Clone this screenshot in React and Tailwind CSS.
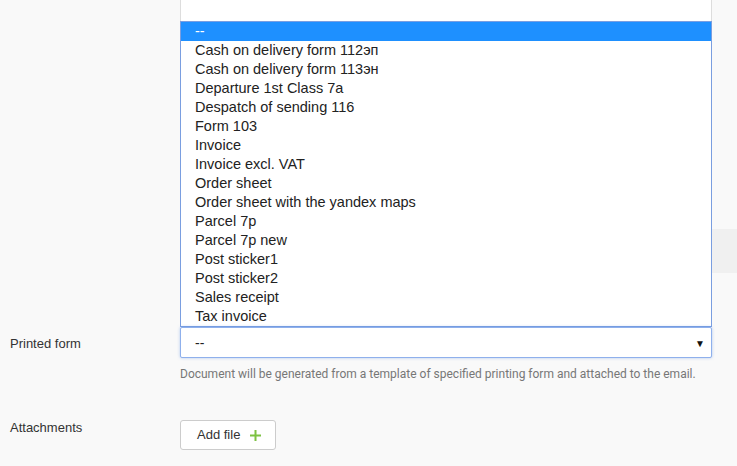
import { useState } from 'react';

const forms = [
  '--',
  'Cash on delivery form 112эп',
  'Cash on delivery form 113эн',
  'Departure 1st Class 7a',
  'Despatch of sending 116',
  'Form 103',
  'Invoice',
  'Invoice excl. VAT',
  'Order sheet',
  'Order sheet with the yandex maps',
  'Parcel 7p',
  'Parcel 7p new',
  'Post sticker1',
  'Post sticker2',
  'Sales receipt',
  'Tax invoice',
];

const App = () => {
  const [selected, setSelected] = useState('--');

  return (
    <div className="min-h-[466px] w-[737px] bg-[#f9f9f9] font-['Liberation_Sans',Arial,sans-serif] text-[#333] overflow-hidden">
      {/* field above, mostly hidden under the open list */}
      <div className="flex">
        <div className="w-[180px] shrink-0" />
        <div className="w-[532px] h-[21px] bg-white border-l border-r border-[#ddd]" />
      </div>

      {/* open dropdown */}
      <div className="flex">
        <div className="w-[180px] shrink-0" />
        <ul className="w-[532px] bg-white border border-[#7a9ee0] text-[14.5px] leading-[19px] text-[#222]">
          {forms.map(f => (
            <li
              key={f}
              onClick={() => setSelected(f)}
              className={`pl-[14px] h-[19px] whitespace-nowrap ${f === selected ? 'bg-[#1e90ff] text-white' : ''}`}
            >
              {f}
            </li>
          ))}
        </ul>
        <div className="w-[25px] h-[44px] mt-[208px] bg-[#f0f0f0]" />
      </div>

      {/* Printed form */}
      <div className="flex">
        <div className="w-[180px] shrink-0 pl-[10px] pt-[7px] text-[13px]">Printed form</div>
        <div className="w-[532px]">
          <div className="h-[31px] bg-white border border-[#8fb0ec] rounded-[2px] shadow-[0_0_3px_rgba(100,150,230,0.5)] flex items-center justify-between pl-[14px] pr-[6px] pt-[2px] text-[14px] text-[#222]">
            <span>{selected}</span>
            <span className="text-[10px] text-[#111]">▼</span>
          </div>
          <p className="mt-[7px] text-[12px] text-[#777] font-['Roboto',sans-serif]">
            Document will be generated from a template of specified printing form and attached to the email.
          </p>
        </div>
      </div>

      {/* Attachments */}
      <div className="flex mt-[37px]">
        <div className="w-[180px] shrink-0 pl-[10px] -mt-[2px] text-[13px]">Attachments</div>
        <button className="h-[30px] w-[96px] pl-[16px] bg-white border border-[#ccc] rounded-[3px] flex items-center gap-[10px] text-[13px] text-[#333]">
          Add file
          <svg width="11" height="11" viewBox="0 0 11 11">
            <path d="M5.5 0v11M0 5.5h11" stroke="#7dc242" strokeWidth="2" />
          </svg>
        </button>
      </div>
    </div>
  );
};

export default App;
